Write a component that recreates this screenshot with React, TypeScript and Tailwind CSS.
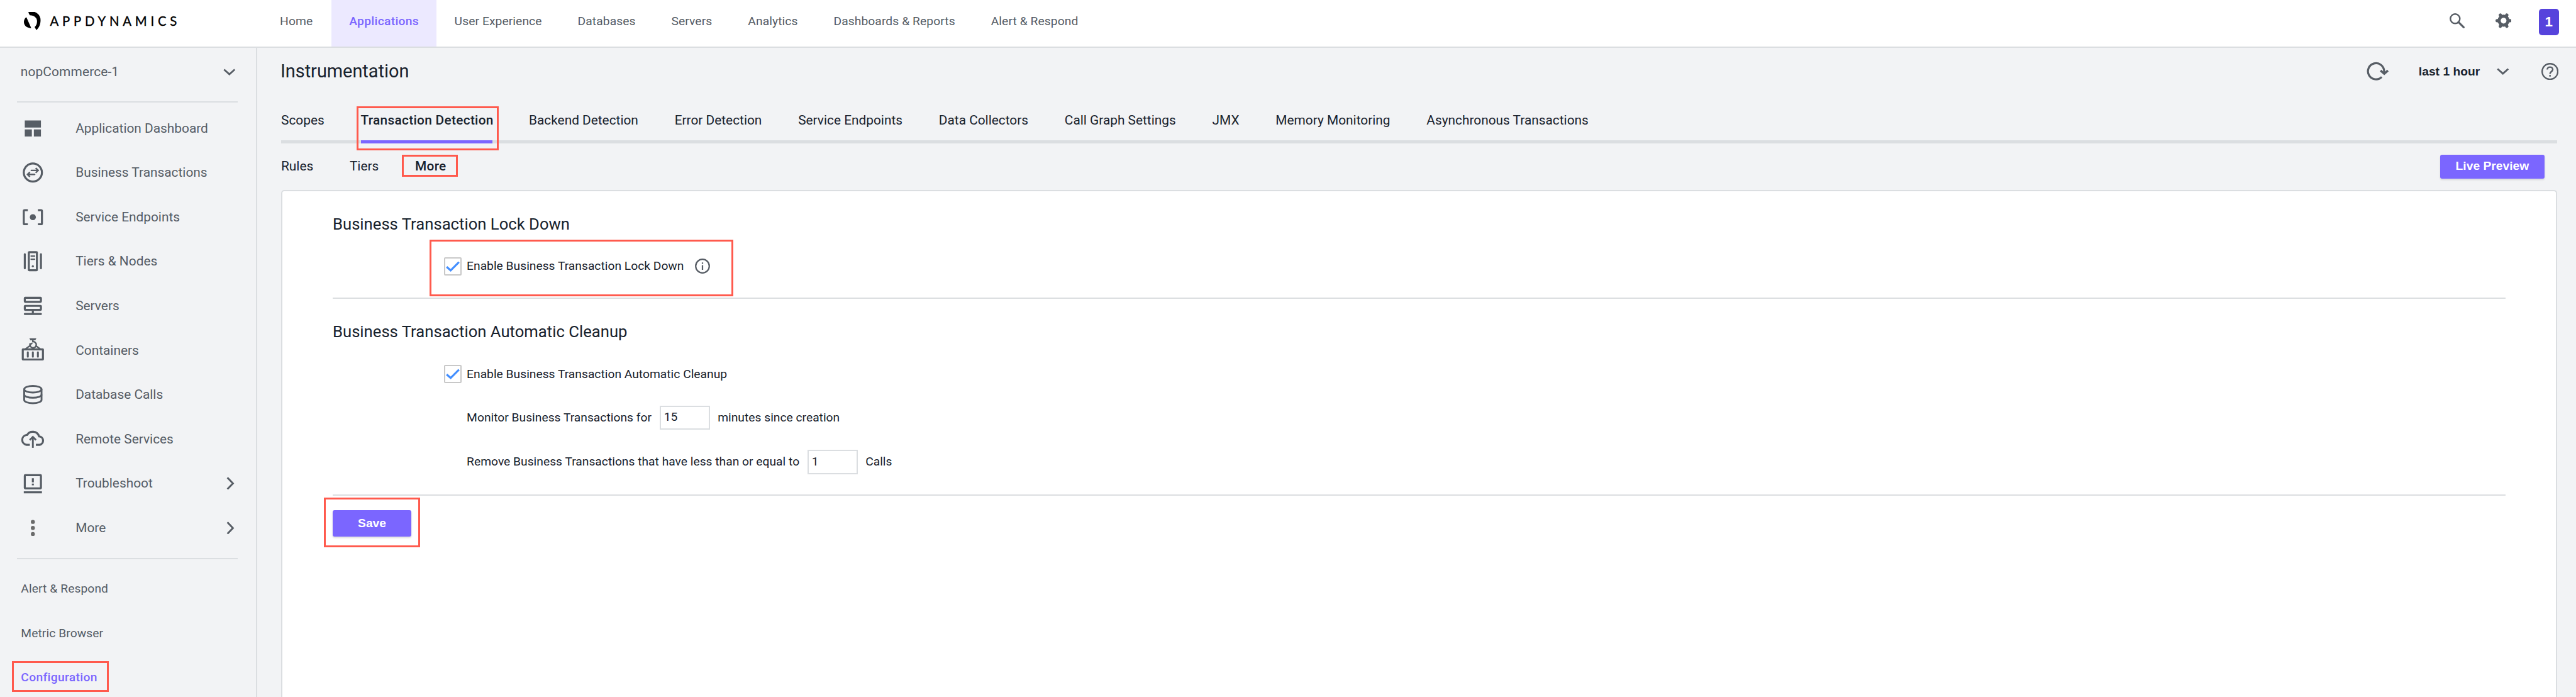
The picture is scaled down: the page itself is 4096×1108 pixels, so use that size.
import React from 'react';

type IconProps = { children: React.ReactNode };

function SideIcon({ children }: IconProps) {
  return (
    <svg
      viewBox="0 0 48 48"
      className="h-[38.5px] w-[38.5px] shrink-0 overflow-visible text-[#575d65]"
      fill="none"
      stroke="currentColor"
      strokeWidth="4"
    >
      {children}
    </svg>
  );
}

function Callout({ className }: { className: string }) {
  return <span className={`pointer-events-none absolute border-[3px] border-[#ff5a4d] ${className}`} />;
}

function ChevronDown() {
  return (
    <svg viewBox="0 0 24 14" className="h-[11.2px] w-[19.5px] shrink-0 text-[#575d65]" fill="none" stroke="currentColor" strokeWidth="3.5">
      <path d="M1.4 1.8 12 11.4 22.6 1.8" />
    </svg>
  );
}

function ChevronRight() {
  return (
    <svg viewBox="0 0 16 26" className="ml-auto h-[20.8px] w-[12.8px] shrink-0 text-[#575d65]" fill="none" stroke="currentColor" strokeWidth="3.6">
      <path d="M2 1.6 13 13 2 24.4" />
    </svg>
  );
}

const sideItems: { label: string; icon: React.ReactNode; expandable?: boolean }[] = [
  {
    label: 'Application Dashboard',
    icon: <path fill="currentColor" stroke="none" d="M8 8h32v14H8zM8 26h14v14H8zM26 26h14v14H26z" />,
  },
  {
    label: 'Business Transactions',
    icon: (
      <>
        <circle cx="24" cy="24" r="18" />
        <g strokeWidth="3">
          <path d="M21 19.8H34" strokeLinecap="round" />
          <path d="M29.6 15.2 34.4 19.8 29.6 24.6" />
          <path d="M27.4 27.8H14" strokeLinecap="round" />
          <path d="M18.2 23.2 13.4 27.8 18.2 32.6" />
        </g>
      </>
    ),
  },
  {
    label: 'Service Endpoints',
    icon: (
      <>
        <path d="M14 10H8q-2 0-2 2v24q0 2 2 2h6M34 10h6q2 0 2 2v24q0 2-2 2h-6" />
        <circle cx="24" cy="24" r="6" fill="currentColor" stroke="none" />
      </>
    ),
  },
  {
    label: 'Tiers & Nodes',
    icon: (
      <>
        <path d="M8 10v28M40 10v28" strokeLinecap="round" />
        <rect x="16" y="6" width="16" height="36" rx="1" />
        <path d="M20.5 13.8h7M20.5 20h7" strokeWidth="2.8" strokeLinecap="round" />
        <circle cx="24" cy="34" r="2.1" fill="currentColor" stroke="none" />
      </>
    ),
  },
  {
    label: 'Servers',
    icon: (
      <>
        <rect x="8" y="8" width="32" height="8" rx="1" />
        <rect x="8" y="24" width="32" height="8" rx="1" />
        <path d="M24 33v6" />
        <path d="M8 40h32" strokeLinecap="round" />
      </>
    ),
  },
  {
    label: 'Containers',
    icon: (
      <>
        <rect x="4" y="23" width="40" height="20" rx="0.5" />
        <path d="M14 28.8v8.6M24 28.8v8.6M34 28.8v8.6" strokeLinecap="round" strokeWidth="3.8" />
        <path d="M17 1h14l-2.2 4H19.2z" fill="currentColor" stroke="none" />
        <path d="M24 4v3.6a6.2 6.2 0 1 1-5.6 5.4l4.6-2.2" strokeWidth="3" />
        <path d="M18.4 10.5v4.5" strokeWidth="2.6" />
        <path d="M18.5 15.5 9.5 22M29.5 15.5 38.5 22" strokeWidth="3" />
      </>
    ),
  },
  {
    label: 'Database Calls',
    icon: (
      <g strokeWidth="3.6">
        <ellipse cx="24" cy="13.4" rx="17.2" ry="6.6" />
        <path d="M6.8 13.4V34.6c0 3.7 7.7 6.6 17.2 6.6s17.2-2.9 17.2-6.6V13.4" />
        <path d="M6.8 24c0 3.7 7.7 6.3 17.2 6.3s17.2-2.6 17.2-6.3" />
      </g>
    ),
  },
  {
    label: 'Remote Services',
    icon: (
      <>
        <path d="M18 35H11.5A9.8 9.8 0 0 1 11.2 15.6H12.5A13.2 13.2 0 0 1 36.3 18.2A8.5 8.5 0 0 1 37.5 35H30" />
        <path d="M24 41V19" strokeWidth="3.6" />
        <path d="M17.8 25.5 24 19.3 30.2 25.5" strokeWidth="3.6" />
      </>
    ),
  },
  {
    label: 'Troubleshoot',
    icon: (
      <>
        <rect x="8" y="8" width="32" height="26" rx="1" />
        <path d="M6 42h36M24 14v8M24 24.6v3.6" />
      </>
    ),
    expandable: true,
  },
  {
    label: 'More',
    icon: (
      <g fill="#6b6b6b" stroke="none">
        <circle cx="24" cy="12" r="4" />
        <circle cx="24" cy="24" r="4" />
        <circle cx="24" cy="36" r="4" />
      </g>
    ),
    expandable: true,
  },
];

const navAfter = ['User Experience', 'Databases', 'Servers', 'Analytics', 'Dashboards & Reports', 'Alert & Respond'];

const tabsAfter = [
  'Backend Detection',
  'Error Detection',
  'Service Endpoints',
  'Data Collectors',
  'Call Graph Settings',
  'JMX',
  'Memory Monitoring',
  'Asynchronous Transactions',
];

function Logo() {
  return (
    <div className="flex h-[66.6px] w-[417px] shrink-0 items-center pl-[37.7px] text-black">
      <svg viewBox="0 0 34 36" className="h-[28.9px] w-[27.3px] shrink-0" fill="currentColor">
        <path d="M8.6 0.8A17 17 0 0 1 33 16.5C33 25.5 29.5 31.5 24.8 36L21.3 29.8C24.5 27 26.3 23 26 17.5C25.6 11.500 20.5 6.800 11.7 6.6z" />
        <path d="M4.9 10.2 14.6 32C5 31.8 0 26.5 0 19.6C0 16 1.5 12.6 4.9 10.2z" />
      </svg>
      <span className="ml-[14.6px] font-[Lato] text-[20.3px] leading-none font-normal tracking-[5.8px] whitespace-nowrap [-webkit-text-stroke:0.4px_black]">
        APPDYNAMICS
      </span>
    </div>
  );
}

function TopBar() {
  return (
    <header className="flex h-[74px] shrink-0 bg-white text-[19.25px] tracking-[0.08px] text-[#555c65]">
      <Logo />
      <nav className="flex h-full whitespace-nowrap">
        <a className="flex w-[110.1px] items-center pb-[5.4px] pl-[28.1px]">Home</a>
        <a className="flex w-[167px] items-center justify-center bg-[#ece9ff] pb-[5.4px] font-medium tracking-[0.3px] text-[#7b66ff]">
          Applications
        </a>
        {navAfter.map((item) => (
          <a key={item} className="flex items-center px-[28.5px] pb-[5.4px]">
            {item}
          </a>
        ))}
      </nav>
      <div className="ml-auto flex h-[66.6px] items-center pr-[27.3px] text-[#575d65]">
        <svg viewBox="0 0 30 30" className="h-[24px] w-[24px]" fill="none" stroke="currentColor">
          <circle cx="11" cy="11" r="9.4" strokeWidth="3" />
          <path d="M17.6 17.6 28 28" strokeWidth="3.8" strokeLinecap="round" />
        </svg>
        <svg viewBox="0 0 32 32" className="ml-[49px] h-[25.7px] w-[25.7px]" stroke="currentColor">
          <circle cx="16" cy="16" r="8.8" fill="none" strokeWidth="6.2" />
          <path
            d="M3.2 16h3M25.8 16h3M9.6 4.900l1.4 2.4M21 24.7l1.4 2.4M22.4 4.900l-1.4 2.4M11 24.7l-1.4 2.4"
            strokeWidth="6.4"
            strokeLinecap="round"
          />
        </svg>
        <div className="mt-[4px] ml-[43.3px] flex h-[41.7px] w-[32.1px] items-center justify-center rounded-[5px] bg-[#5643dc] font-['Liberation_Sans',sans-serif] text-[22.4px] font-bold text-white">
          1
        </div>
      </div>
    </header>
  );
}

function SideBar() {
  return (
    <aside className="flex w-[407px] shrink-0 flex-col text-[#555c65]">
      <div className="flex h-[76.6px] shrink-0 items-center justify-between pr-[33px] pl-[32.8px] text-[20.85px] tracking-[0.15px]">
        <span>nopCommerce-1</span>
        <ChevronDown />
      </div>
      <div className="mt-[8px] ml-[27.3px] h-[2px] w-[351.2px] shrink-0 bg-[#dbdee1]" />
      <ul className="mt-[6px] text-[20.85px]">
        {sideItems.map((item) => (
          <li key={item.label} className="flex h-[70.57px] items-center pr-[34.4px] pl-[33.2px]">
            <SideIcon>{item.icon}</SideIcon>
            <span className="ml-[48.5px] pt-[1px]">{item.label}</span>
            {item.expandable && <ChevronRight />}
          </li>
        ))}
      </ul>
      <div className="mt-[12.8px] ml-[27.3px] h-[2px] w-[351.2px] shrink-0 bg-[#dbdee1]" />
      <ul className="mt-[11.6px] text-[19.25px] tracking-[0.08px]">
        <li className="flex h-[70.57px] items-center pt-[1.5px] pl-[33.3px]">Alert &amp; Respond</li>
        <li className="flex h-[70.57px] items-center pt-[1.5px] pl-[33.3px]">Metric Browser</li>
        <li className="relative flex h-[70.57px] items-center pt-[1.5px] pl-[33.3px] font-medium tracking-[0.32px] text-[#7b66ff]">
          Configuration
          <Callout className="top-[8.8px] left-[19.2px] h-[49px] w-[154px]" />
        </li>
      </ul>
    </aside>
  );
}

function Checkbox() {
  return (
    <span className="flex h-[28.9px] w-[28.9px] shrink-0 items-center justify-center rounded-[2px] border-2 border-[#c8c8c8] bg-white">
      <svg viewBox="0 0 28 22" className="h-[17.6px] w-[22.4px]" fill="none" stroke="#448fff" strokeWidth="4">
        <path d="M1.5 11.5 9.5 18.5 26 2" />
      </svg>
    </span>
  );
}

function NumberField({ value }: { value: string }) {
  return (
    <span className="flex h-[38.5px] w-[80.2px] shrink-0 items-center border-2 border-[#dbdee1] bg-white pl-[5px]">
      {value}
    </span>
  );
}

function Panel() {
  return (
    <section className="flex-1 rounded-t-[5px] border-2 border-b-0 border-[#dbdee1] bg-white px-[80px] pt-[32.3px] text-[19.25px]">
      <h2 className="flex h-[40px] items-center text-[25.66px]">Business Transaction Lock Down</h2>
      <div className="relative mt-[27.6px] ml-[176.5px] flex h-[40px] w-fit items-center">
        <Checkbox />
        <span className="ml-[7.7px] pt-[1px]">Enable Business Transaction Lock Down</span>
        <svg viewBox="0 0 30 30" className="ml-[17.6px] h-[24px] w-[24px] text-[#575d65]" fill="none" stroke="currentColor" strokeWidth="2.8">
          <circle cx="15" cy="15" r="13.5" />
          <path d="M15 13v9.500M15 7.800v2.800" />
        </svg>
        <Callout className="top-[-22.5px] left-[-22.5px] h-[90.6px] w-[482.7px]" />
      </div>
      <div className="mt-[29.7px] h-[2px] bg-[#dbdee1]" />
      <h2 className="mt-[32px] flex h-[40px] items-center text-[25.66px]">Business Transaction Automatic Cleanup</h2>
      <div className="mt-[27.8px] ml-[176.5px] flex h-[40px] items-center">
        <Checkbox />
        <span className="ml-[7.7px] pt-[1px]">Enable Business Transaction Automatic Cleanup</span>
      </div>
      <div className="mt-[29.7px] ml-[213.1px] flex h-[38.5px] items-center">
        <span className="w-[306.6px] pt-[1px]">Monitor Business Transactions for</span>
        <NumberField value="15" />
        <span className="ml-[12.3px] pt-[1px]">minutes since creation</span>
      </div>
      <div className="mt-[32.1px] ml-[213.1px] flex h-[38.5px] items-center">
        <span className="w-[541.6px] pt-[1px]">Remove Business Transactions that have less than or equal to</span>
        <NumberField value="1" />
        <span className="ml-[12.3px] pt-[1px]">Calls</span>
      </div>
      <div className="mt-[32px] h-[2px] bg-[#dbdee1]" />
      <div className="relative mt-[23.7px] w-fit">
        <button className="flex h-[41.7px] w-[125.1px] items-center justify-center rounded-[3px] bg-[#7b66ff] font-['Liberation_Sans',sans-serif] font-bold text-white shadow-[0_2px_3px_rgba(0,0,0,0.15)]">
          Save
        </button>
        <Callout className="inset-x-[-14.4px] top-[-20px] bottom-[-16.8px]" />
      </div>
    </section>
  );
}

export default function App() {
  return (
    <div className="flex h-[1108px] w-[4096px] flex-col overflow-hidden bg-[#f2f3f5] font-[Roboto,sans-serif]">
      <TopBar />
      <div className="h-[2px] shrink-0 bg-[#dbdee1]" />
      <div className="flex min-h-0 flex-1">
        <SideBar />
        <div className="w-[2px] shrink-0 bg-[#dbdee1]" />
        <main className="flex min-w-0 flex-1 flex-col pr-[30.5px] pl-[38px] text-[#18222d]">
          <div className="flex h-[75px] shrink-0 items-center">
            <h1 className="ml-[-1px] pt-[1px] text-[28.87px]">Instrumentation</h1>
            <svg viewBox="0 0 46 40" className="ml-auto h-[32.1px] w-[36.9px] text-[#575d65]" fill="none" stroke="currentColor" strokeWidth="4">
              <path d="M31.3 31.6A16 16 0 1 1 36 20.5V25" />
              <path d="M29 18.8 36.3 25.2 43.6 18.8" strokeWidth="4.4" />
            </svg>
            <span className="ml-[46.5px] pt-[1px] font-['Liberation_Sans',sans-serif] text-[19.25px] font-bold">last 1 hour</span>
            <span className="ml-[27px] flex">
              <ChevronDown />
            </span>
            <svg viewBox="0 0 34 34" className="mr-[-2.5px] ml-[51px] h-[27.3px] w-[27.3px] text-[#575d65]" fill="none" stroke="currentColor" strokeWidth="3">
              <circle cx="17" cy="17" r="15.5" />
              <path d="M11.6 13.2c0-3 2.4-5 5.4-5s5.4 2 5.4 4.900c0 4-5.4 4.2-5.4 8.6M17 23.8v3.4" />
            </svg>
          </div>
          <nav className="flex h-[77px] shrink-0 gap-[57.8px] border-b-[5px] border-[#dbdee1] text-[20.85px] whitespace-nowrap">
            <a className="flex items-center pt-[10px]">Scopes</a>
            <a className="relative mb-[-5px] flex w-[209.7px] items-center border-b-[5px] border-[#7b66ff] pt-[10px] font-medium tracking-[0.3px]">
              Transaction Detection
              <Callout className="top-[17.6px] right-[-10px] bottom-[-16px] left-[-6.4px]" />
            </a>
            {tabsAfter.map((tab) => (
              <a key={tab} className="flex items-center pt-[10px]">
                {tab}
              </a>
            ))}
          </nav>
          <div className="flex h-[73.5px] shrink-0 items-center gap-[57.7px] text-[20.85px]">
            <span className="pb-[1.2px]">Rules</span>
            <span className="pb-[1.2px]">Tiers</span>
            <span className="relative pb-[1.2px] font-medium tracking-[0.3px]">
              More
              <Callout className="top-[-3px] left-[-20.6px] h-[35.3px] w-[88.2px]" />
            </span>
            <button className="mr-[19.2px] ml-auto flex h-[38.5px] w-[166.8px] items-center justify-center rounded-[3px] bg-[#7b66ff] font-['Liberation_Sans',sans-serif] text-[19.25px] font-bold text-white shadow-[0_2px_3px_rgba(0,0,0,0.12)]">
              Live Preview
            </button>
          </div>
          <Panel />
        </main>
      </div>
    </div>
  );
}
